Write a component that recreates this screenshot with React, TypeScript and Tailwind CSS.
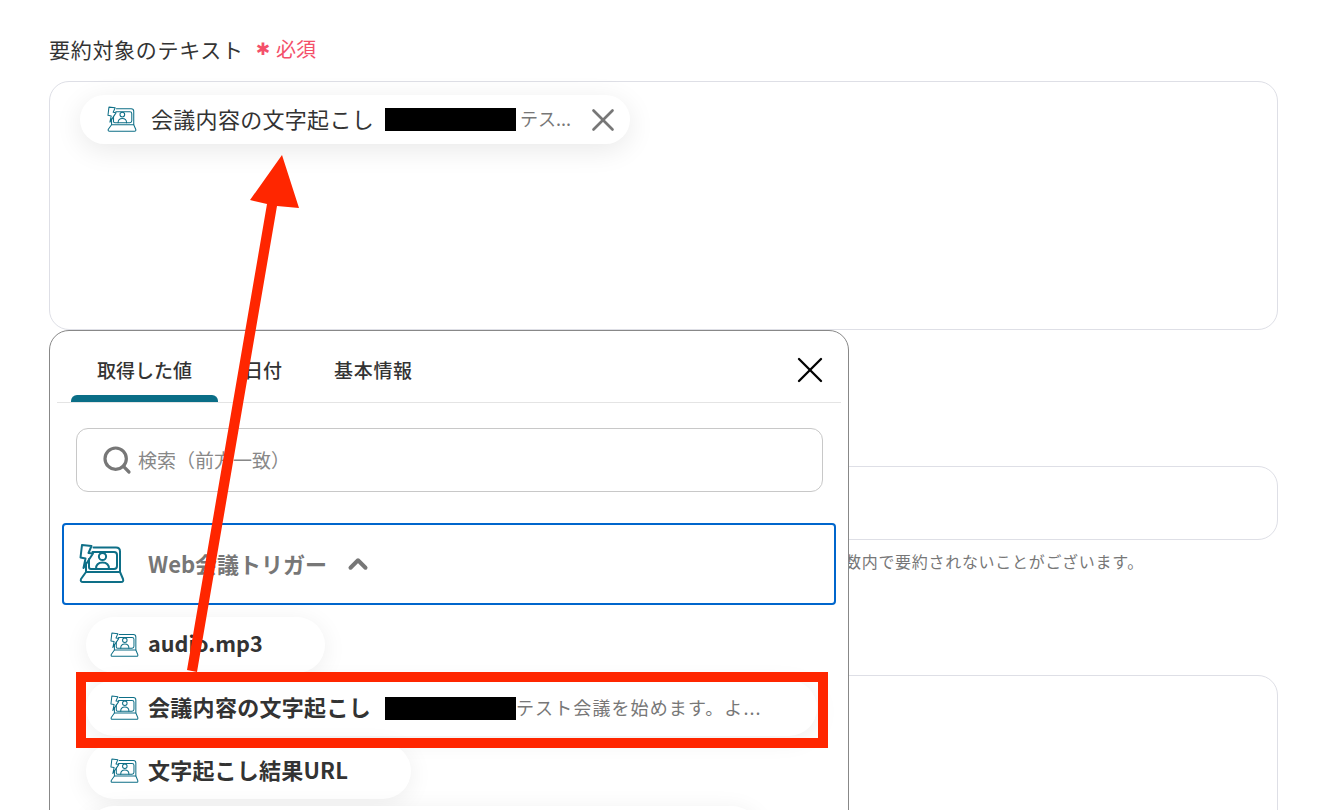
import React from 'react';
import { X, Search, ChevronUp } from 'lucide-react';

const FONT = "font-['Noto_Sans_CJK_JP','Noto_Sans',sans-serif]";

// laptop with a lightning bolt, the app's trigger icon
const TriggerIcon = ({ className, strokeWidth = 2 }: { className: string; strokeWidth?: number }) => (
  <svg viewBox="0 0 46 40" fill="none" stroke="#0e6f87" strokeWidth={strokeWidth} strokeLinejoin="round" strokeLinecap="round" className={className}>
    <path d="M3 1 L12.5 2 L9.5 9 L14 9.5 L4.5 24 L6.5 14.5 L1.5 13.5 Z" />
    <path d="M14.5 3.5 H37 Q41 3.5 41 7.5 V27.5 M7 19 V27.5" />
    <path d="M13.5 8 H35 Q38 8 38 11 V22 Q38 25 35 25 H12 Q10 25 10 23 V15" />
    <circle cx="23.5" cy="12.5" r="3.6" />
    <path d="M17 25 C17 20.5 19.5 18.5 23.5 18.5 C27.5 18.5 30 20.5 30 25" />
    <path d="M7 28 H41 L44 35 Q45 38 42 38 H4 Q1 38 2 35 Z" />
  </svg>
);

const Redacted = () => <span className="block bg-black h-[23px] w-[131px] shrink-0" />;

const ValuePill = ({ children, className }: { children?: React.ReactNode; className: string }) => (
  <div className={`flex items-center h-[56px] rounded-full bg-white shrink-0 shadow-[0_4px_24px_rgba(0,0,0,0.07)] pl-[24px] ${className}`}>
    {children}
  </div>
);

export default function App() {
  return (
    <div className={`relative h-[810px] w-[1324px] overflow-hidden bg-white ${FONT}`}>
      {/* form behind the popup */}
      <div className="flex flex-col px-[49px] pr-[46px] pt-[35px]">
        <div className="flex items-center h-[30px] gap-[12px]">
          <span className="mb-[3px] text-[21px] leading-[30px] text-[#333] tracking-[0.7px]">要約対象のテキスト</span>
          <span className="mb-[3px] text-[20px] leading-[30px] text-[#f4506a] flex items-center gap-[6px]">
            <span className="text-[17px] leading-[30px] font-['DejaVu_Sans',sans-serif]">✱</span>必須
          </span>
        </div>
        <div className="mt-[16px] h-[249px] rounded-[20px] border border-[#dedfe6] pl-[30px] pt-[13px]">
          <div className="flex items-center w-[550px] h-[49px] rounded-full bg-white shadow-[0_6px_28px_rgba(0,0,0,0.09)] pl-[27px]">
            <TriggerIcon className="w-[30px] h-[27px] shrink-0" strokeWidth={1.6} />
            <span className="mb-[2px] ml-[14px] w-[234px] shrink-0 text-[22px] text-[#333] tracking-[0.3px] whitespace-nowrap">会議内容の文字起こし</span>
            <Redacted />
            <span className="mb-[2px] ml-[4px] w-[60px] shrink-0 text-[18px] text-[#777] whitespace-nowrap">テス...</span>
            <X className="ml-[4px] w-[38px] h-[38px] text-[#777] shrink-0" strokeWidth={1.7} />
          </div>
        </div>
        <div className="mt-[136px] h-[74px] rounded-[20px] border border-[#dedfe6]" />
        <p className="mt-[11px] h-[20px] pr-[134px] text-right text-[16px] leading-[20px] text-[#777] tracking-[0.7px]">文字数内で要約されないことがございます。</p>
        <div className="mt-[104px] h-[200px] rounded-[20px] border border-[#dedfe6]" />
      </div>

      {/* value picker popup */}
      <div className="absolute left-[49px] top-[330px] w-[800px] h-[520px] bg-white rounded-[20px] border border-[#888] flex flex-col">
        <div className="relative mx-[7px] flex h-[72px] shrink-0 items-start border-b border-[#e4e4e4]">
          <div className="flex flex-col items-center w-[147px] ml-[14px] h-[71px] justify-between">
            <span className="mt-[24px] text-[19px] leading-[30px] font-medium text-[#333]">取得した値</span>
            <span className="block w-[147px] h-[7px] rounded-t-[6px] bg-[#0a6e87]" />
          </div>
          <span className="ml-[26px] mt-[24px] text-[19px] leading-[30px] font-medium text-[#333]">日付</span>
          <span className="ml-[52px] mt-[24px] text-[19px] leading-[30px] font-medium text-[#333] tracking-[0.7px]">基本情報</span>
          <X className="absolute left-[731px] top-[17px] w-[44px] h-[44px] text-black" strokeWidth={1.3} />
        </div>
        <div className="ml-[26px] mr-[25px] mt-[25px] flex h-[64px] shrink-0 items-center rounded-[12px] border border-[#c8c8c8] pl-[24px]">
          <Search className="w-[32px] h-[32px] text-[#777]" strokeWidth={2.4} />
          <span className="ml-[5px] text-[19px] text-[#888]">検索（前方一致）</span>
        </div>
        <div className="mx-[12px] mt-[31px] flex h-[82px] shrink-0 items-center rounded-[4px] border-2 border-[#0066cc] pl-[15px]">
          <TriggerIcon className="w-[46px] h-[40px] shrink-0" />
          <span className="mb-[2px] ml-[23px] text-[22px] font-bold text-[#777]">Web会議トリガー</span>
          <ChevronUp className="ml-[16px] w-[30px] h-[30px] text-[#777]" strokeWidth={3.2} />
        </div>
        <div className="mt-[12px] ml-[36px] flex flex-col gap-[7px]">
          <ValuePill className="w-[239px]">
            <TriggerIcon className="w-[29px] h-[26px] shrink-0" strokeWidth={1.6} />
            <span className="mb-[3px] ml-[9px] text-[21.6px] font-bold text-[#333]">audio.mp3</span>
          </ValuePill>
          <ValuePill className="w-[731px]">
            <TriggerIcon className="w-[29px] h-[26px] shrink-0" strokeWidth={1.6} />
            <span className="mb-[3px] ml-[9px] w-[237px] shrink-0 text-[22px] font-bold text-[#333] tracking-[0.3px] whitespace-nowrap">会議内容の文字起こし</span>
            <Redacted />
            <span className="mb-[2px] text-[18px] text-[#777] tracking-[1.1px] whitespace-nowrap">テスト会議を始めます。よ...</span>
          </ValuePill>
          <ValuePill className="w-[325px]">
            <TriggerIcon className="w-[29px] h-[26px] shrink-0" strokeWidth={1.6} />
            <span className="mb-[3px] ml-[9px] text-[22px] font-bold text-[#333] tracking-[0.2px] whitespace-nowrap">文字起こし結果URL</span>
          </ValuePill>
          <ValuePill className="w-[674px]" />
        </div>
      </div>

      {/* red highlight frame */}
      <div className="absolute left-[76px] top-[672px] w-[752px] h-[76px] border-[10px] border-[#ff2600]" />

      {/* red arrow annotation */}
      <svg viewBox="0 0 1324 810" className="absolute inset-0 w-[1324px] h-[810px] pointer-events-none">
        <path d="M187 670 L267 204 L250 200 L282 155 L299 208 L277 206 L197 672 Z" fill="#ff2600" />
      </svg>
    </div>
  );
}
